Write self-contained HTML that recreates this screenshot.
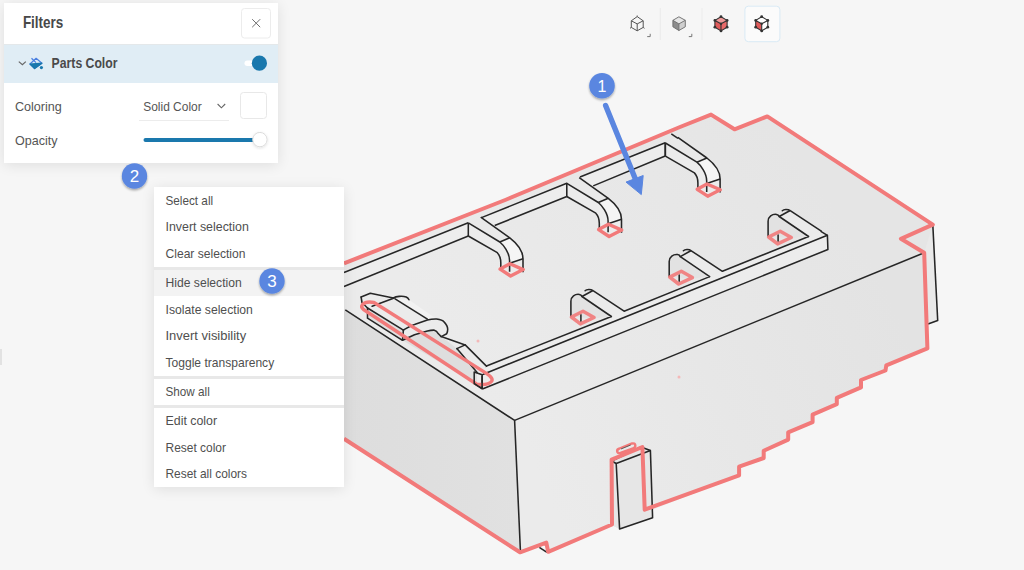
<!DOCTYPE html>
<html><head><meta charset="utf-8">
<style>
html,body{margin:0;padding:0;width:1024px;height:570px;overflow:hidden;background:#f6f6f6;}
svg{display:block;font-family:"Liberation Sans",sans-serif;}
</style></head>
<body>
<svg width="1024" height="570" viewBox="0 0 1024 570">
<defs>
  <filter id="soft" x="0" y="0" width="1024" height="570" filterUnits="userSpaceOnUse"><feGaussianBlur stdDeviation="0.35"/></filter>
  <filter id="sh2" x="-30%" y="-30%" width="160%" height="160%">
    <feGaussianBlur in="SourceAlpha" stdDeviation="7"/><feOffset dy="2"/>
    <feComponentTransfer><feFuncA type="linear" slope="0.10"/></feComponentTransfer>
    <feMerge><feMergeNode/><feMergeNode in="SourceGraphic"/></feMerge>
  </filter>
  <filter id="sh" x="-20%" y="-20%" width="140%" height="140%">
    <feDropShadow dx="0" dy="1" stdDeviation="1.5" flood-color="#000" flood-opacity="0.12"/>
  </filter>
  <filter id="bsh" x="-50%" y="-50%" width="200%" height="200%">
    <feDropShadow dx="0" dy="1.5" stdDeviation="1.2" flood-color="#000" flood-opacity="0.35"/>
  </filter>
</defs>
<rect x="0" y="0" width="1024" height="570" fill="#f6f6f6"/>
<rect x="0" y="349" width="2" height="16" fill="#e2e2e2"/>

<!-- MODEL -->
<g id="model" filter="url(#soft)">
  <defs>
    <linearGradient id="gLeft" x1="345" y1="0" x2="520" y2="0" gradientUnits="userSpaceOnUse">
      <stop offset="0" stop-color="#dddddd"/><stop offset="1" stop-color="#e1e1e1"/>
    </linearGradient>
    <linearGradient id="gRight" x1="540" y1="480" x2="900" y2="320" gradientUnits="userSpaceOnUse">
      <stop offset="0" stop-color="#ebebeb"/><stop offset="1" stop-color="#e3e3e3"/>
    </linearGradient>
    <linearGradient id="gTop" x1="480" y1="390" x2="800" y2="160" gradientUnits="userSpaceOnUse">
      <stop offset="0" stop-color="#ebebeb"/><stop offset="1" stop-color="#e5e5e5"/>
    </linearGradient>
    <g id="hb">
      <path d="M12.4,-5.6 L41.5,15 C48,20 54.7,28 54.7,36 V49.5 L43,55 L32.5,47.5 V40 C32.5,36 31,32 29,29.9 L0,13.2 V0 Z" fill="#ececec"/>
      <path d="M12.4,-5.6 L41.5,15 L31.5,19.2 L0,0 Z" fill="#e9e9e9"/>
      <path d="M41.5,15 C48,20 54.7,28 54.7,36 L41.3,40.5 C41.3,30 35,22 31.5,19.2 Z" fill="#f5f5f5"/>
      <g fill="none" stroke="#262626" stroke-width="1.55" stroke-linejoin="round">
        <path d="M0,0 V13.2"/>
        <path d="M0,0 L31.5,19.2 C35,22 41.3,30 41.3,38 V49"/>
        <path d="M0,13.2 L29,29.9 C31,32 32.5,36 32.5,40 V47.5"/>
        <path d="M31.5,19.2 L41.5,15"/>
        <path d="M12.4,-5.6 L41.5,15 C48,20 54.7,28 54.7,36 V49.5"/>
        <path d="M41.3,40.5 L54.7,36"/>
      </g>
      <path d="M31.8,46.3 L41.6,41 L54.9,46.8 L42.3,53.2 Z" fill="none" stroke="#f27a7a" stroke-width="3.4" stroke-linejoin="round"/>
    </g>
    <g id="hf">
      <path d="M-11.1,-1.5 V-16.5 C-11.1,-21 -7,-24 -2.7,-23.4 C-1.5,-23.2 -0.5,-22.5 0,-21.3 L10.5,-27.1 L42.1,-6.6 L29.4,-1.3 L11,0.8 Z" fill="#ebebeb"/>
      <path d="M-11.1,-1.5 V-16.5 C-11.1,-21 -7,-24 -2.7,-23.4 C-1.5,-23.2 -0.5,-22.5 0,-21.3 L29.4,-1.3 L11,0.8 Z" fill="#e2e2e2"/>
      <g fill="none" stroke="#262626" stroke-width="1.55" stroke-linejoin="round" stroke-linecap="round">
        <path d="M-11.1,-1.5 V-16.5 C-11.1,-21 -7,-24 -2.7,-23.4 C-1.5,-23.2 -0.5,-22.5 0,-21.3 L29.4,-1.3"/>
        <path d="M0,-21.3 L10.5,-27.1"/>
        <path d="M3.1,-27.1 C4.5,-28.5 8.5,-29 11,-27.1 L42.1,-6.6"/>
        <path d="M-1.1,-2.9 V3.4"/>
      </g>
      <path d="M-10.6,-0.8 L1,-6.6 L12.1,-0.3 L-1.6,6.1 Z" fill="none" stroke="#f27a7a" stroke-width="3.5" stroke-linejoin="round" stroke-opacity="0.9"/>
    </g>
  </defs>
  <!-- silhouette fill -->
  <path d="M344,263.3 L505.2,200 L680,127 L711,114.6 L734.5,129.3 L767.3,116.4 L932.8,224.6 L937.7,320.4 L928,324 L927.4,348.4 L886.3,365.3 L885.5,370.5 L861,380 L861,387.4 L836.8,397.9 L836.8,404.2 L812.6,414.7 L812.6,422.1 L788.2,432.3 L788.2,439.6 L763.7,450.7 L763.7,458 L739.1,466.7 L739.1,475.3 L652,510 L652.6,517.7 L619.6,529 L612,525 L548.2,551.8 L546.3,542.6 L520,552.3 L344,438.8 Z" fill="url(#gTop)"/>
  <path d="M345.3,309.9 L514.6,420.4 L520.4,551 L520,552.3 L344,438.8 L344,309 Z" fill="url(#gLeft)"/>
  <path d="M514.6,420.4 L924.2,252.8 L927.4,348.4 L886.3,365.3 L885.5,370.5 L861,380 L861,387.4 L836.8,397.9 L836.8,404.2 L812.6,414.7 L812.6,422.1 L788.2,432.3 L788.2,439.6 L763.7,450.7 L763.7,458 L739.1,466.7 L739.1,475.3 L645,511 L612,525 L548.2,551.8 L546.3,542.6 L520.4,551 Z" fill="url(#gRight)"/>
  <path d="M924.2,252.8 L932.8,224.6 L937.7,320.4 L928,324 Z" fill="#e9e9e9"/>
  <!-- back wall faces -->
  <path d="M344,272.5 L468.3,222.8 L468.3,236 L344,286.5 Z" fill="#ededed"/>
  <path d="M481.5,217.6 L566.8,183.3 L566.8,196.5 L494.7,225.5 Z" fill="#ededed"/>
  <path d="M580,177 L665.2,142.8 L665.2,156 L593.2,185.9 Z" fill="#ededed"/>
  <!-- front rail -->
  <path d="M474.2,372.1 L477.7,369.5 L820,230.8 L827.4,235.3 L827.9,249.5 L483,388.8 L474.2,383.5 Z" fill="#ececec"/>
  <g fill="none" stroke="#262626" stroke-width="1.55" stroke-linejoin="round">
    <!-- box edges -->
    <path d="M345.3,309.9 L514.6,420.4 L520.4,550.6"/>
    <path d="M514.6,420.4 L924.2,252.8"/>
    <path d="M932.8,224.6 L937.7,320.4 L928,324"/>
    <path d="M539.3,547.3 L547,552.3"/>
    <!-- back wall -->
    <path d="M344,272.5 L468.3,222.8"/>
    <path d="M344,286.5 L468.3,236"/>
    <path d="M481.5,217.6 L566.8,183.3 V196.5 L494.7,225.5"/>
    <path d="M580,177 L665.2,142.8 V156 L593.2,185.9"/>
    <!-- front rail -->
    <path d="M477.7,369.5 L611.4,316.5"/>
    <path d="M624.1,311.2 L709.7,276.6"/>
    <path d="M722.4,271.3 L808.6,236.5"/>
    <path d="M820,230.8 L827.4,235.3"/>
    <path d="M474.2,372.1 L482.1,374.7 L827.4,235.3 L827.9,249.5 L483,388.8 L474.2,383.5 Z"/>
    <path d="M482.1,374.7 V388.8"/>
    <path d="M477.7,369.5 L474.2,372.1"/>
  </g>
  <use href="#hb" x="468.3" y="222.8"/>
  <use href="#hb" x="566.8" y="183.3"/>
  <use href="#hb" x="665.4" y="143"/>
  <path d="M671.3,133.8 L678,138.4" fill="none" stroke="#262626" stroke-width="1.55"/>
  <use href="#hf" x="582" y="317.8"/>
  <use href="#hf" x="680.3" y="277.9"/>
  <use href="#hf" x="779.2" y="237.8"/>
  <!-- latch -->
  <g>
    <path d="M361.1,297 L370.3,293.3 L393.3,297.9 C396,296.5 402,295.5 406.2,297 L409,299.7 L427.4,319.1 L436.6,319.1 C441,319.5 445,322 447.7,329.2 L465.2,344.9 L486.4,366.1 L477.1,384.5 L402.5,340.3 L367.5,318.2 L367.5,308 L361.1,302.5 Z" fill="#ebebeb"/>
    <path d="M367.5,308 L403.4,330.1 L402.5,340.3 L367.5,318.2 Z" fill="#e0e0e0"/>
    <path d="M402.5,340.3 L414.5,334.8 L427.4,331.1 L433.8,330.1 L441.2,336.6 L456.9,348.6 L477.1,372.5 L477.1,384.5 Z" fill="#dedede"/>
    <path d="M395.1,298.8 L409,299.7 L436.6,319.1 L427.4,320 Z" fill="#f2f2f2"/>
    <g fill="none" stroke="#262626" stroke-width="1.55" stroke-linejoin="round" stroke-linecap="round">
      <path d="M361.1,297 L370.3,293.3 L393.3,297.9 C396,296.5 402,295.5 406.2,297 C407.5,297.6 408.5,298.6 409,299.7"/>
      <path d="M361.1,297 L362,302.5 L367.5,308 L403.4,330.1"/>
      <path d="M367.5,308 V318.2 L402.5,340.3 L403.4,330.1"/>
      <path d="M372.1,306.2 L394.2,297.9"/>
      <path d="M395.1,298.8 L427.4,319.1"/>
      <path d="M403.4,330.1 C407,328 410,326 414.5,324.6 L427.4,320 C431,319.2 434,319 436.6,319.1 C440,319.5 443,320.5 444,321.9 C446,324 447.7,326.5 447.7,329.2 C447.7,331 447.3,332.5 446.7,333.8 L441.2,336.6"/>
      <path d="M402.5,340.3 L414.5,334.8 L427.4,331.1 C429.5,330.5 431.5,330.1 433.8,330.1 C435.5,330.5 437.5,332 438.4,333.8 L441.2,336.6 L465.2,344.9 L486.4,366.1"/>
      <path d="M456.9,348.6 L465.2,344.9"/>
      <path d="M456.9,348.6 L477.1,372.5"/>
    </g>
    <path d="M374,302.5 L486.4,373.4 Q494,378.5 491.5,381.5 Q489,384.5 482,384.5 L477.1,384.5 L363.5,309.5 Q360.5,307 362.5,304.5 Q366,301 374,302.5 Z" fill="none" stroke="#f27a7a" stroke-width="3.4" stroke-linejoin="round"/>
  </g>
  <g fill="none" stroke="#262626" stroke-width="1.55" stroke-linejoin="round">
    <path d="M474.2,372.1 L482.1,374.7 V388.8 L474.2,383.5 Z"/>
  </g>
  <!-- tab -->
  <path d="M611.6,461 L641,447 L650.4,450.5 L652.6,517.7 L619.6,529 L612.8,525.7 Z" fill="#e6e6e6"/>
  <g fill="none" stroke="#262626" stroke-width="1.55" stroke-linejoin="round">
    <path d="M616.2,463.5 L650.4,450.5 L652.6,517.7 L619.6,529 Z"/>
    <path d="M611.6,461 L641,447 L650.4,450.5"/>
    <path d="M611.6,461 L616.2,463.5"/>
  </g>
  <!-- red outline -->
  <path d="M344,263.3 L505.2,200 L680,127 L711,114.6 L734.5,129.3 L767.3,116.4 L932.8,224.6 L900.9,238.8 L924.2,252.8 L927.4,348.4 L886.3,365.3 L885.5,370.5 L861,380 L861,387.4 L836.8,397.9 L836.8,404.2 L812.6,414.7 L812.6,422.1 L788.2,432.3 L788.2,439.6 L763.7,450.7 L763.7,458 L739.1,466.7 L739.1,475.3 L644.7,509.7 L642.4,447 L611.6,459.6 L612,524.5 L548.2,551.8 L546.3,542.6 L520,552.3 L344,438.8" fill="none" stroke="#f27a7a" stroke-width="4" stroke-linejoin="round"/>
  <path d="M619.5,448.5 L632,443.5 C636,442.5 636.5,447 633,448.5 L620.5,453 C616.5,454 616,449.5 619.5,448.5 Z" fill="none" stroke="#f27a7a" stroke-width="2.4"/>
  <path d="M621,449 L630.7,445" stroke="#555" stroke-width="0.9"/>
  <circle cx="478" cy="341" r="1.5" fill="#f4b8b8"/>
  <circle cx="679" cy="377" r="1.5" fill="#f4b8b8"/>
  <!-- arrow -->
  <path d="M605.6,105.5 L637,183" stroke="#5a86e0" stroke-width="5.4" stroke-linecap="round"/>
  <path d="M641.3,194.6 L626,182.1 L643.2,175.5 Z" fill="#5a86e0" stroke="#5a86e0" stroke-width="1" stroke-linejoin="round"/>
</g>

<!-- TOOLBAR -->
<g id="toolbar">
  <line x1="660.3" y1="8" x2="660.3" y2="40" stroke="#ececec" stroke-width="1"/>
  <line x1="702" y1="8" x2="702" y2="40" stroke="#ececec" stroke-width="1"/>
  <rect x="744.9" y="6.2" width="35" height="35.5" rx="3.5" fill="#fbfbfb" stroke="#d9eaf5" stroke-width="1"/>
  <!-- cube 1 wireframe -->
  <g fill="none" stroke="#555" stroke-width="1" stroke-linejoin="round">
    <path d="M637.2,16.6 L643.2,20.8 L643.2,27.4 L637.2,30.8 L631.3,27.4 L631.3,20.8 Z"/>
    <path d="M631.3,20.8 L637.2,23.9 L643.2,20.8 M637.2,23.9 V30.8"/>
    <path d="M637.2,16.6 V15.5 M631.3,27.4 L630,28.3 M643.2,27.4 L644.5,28.3"/>
  </g>
  <path d="M647.2,36.6 H650.2 V33.8" fill="none" stroke="#777" stroke-width="1"/>
  <!-- cube 2 shaded -->
  <path d="M678.9,16.8 L685.3,20.3 L678.9,23.9 L672.9,20.3 Z" fill="#e6e6e6"/>
  <path d="M672.9,20.3 L678.9,23.9 L678.9,30.5 L672.9,26.8 Z" fill="#8c8c8c"/>
  <path d="M685.3,20.3 L678.9,23.9 L678.9,30.5 L685.3,26.8 Z" fill="#cfcfcf"/>
  <g fill="none" stroke="#6a6a6a" stroke-width="0.9" stroke-linejoin="round">
    <path d="M678.9,16.8 L685.3,20.3 L685.3,26.8 L678.9,30.5 L672.9,26.8 L672.9,20.3 Z"/>
    <path d="M672.9,20.3 L678.9,23.9 L685.3,20.3 M678.9,23.9 V30.5"/>
  </g>
  <path d="M688.8,36.6 H691.8 V33.8" fill="none" stroke="#777" stroke-width="1"/>
  <!-- cube 3 red -->
  <path d="M721,16.7 L727.1,20.4 L721,23.8 L714.9,20.4 Z" fill="#f09a9a"/>
  <path d="M714.9,20.4 L721,23.8 L721,30.9 L714.9,27.2 Z" fill="#e05a5a"/>
  <path d="M727.1,20.4 L721,23.8 L721,30.9 L727.1,27.2 Z" fill="#ea6a6a"/>
  <g fill="none" stroke="#333" stroke-width="1.1" stroke-linejoin="round">
    <path d="M721,16.7 L727.1,20.4 L727.1,27.2 L721,30.9 L714.9,27.2 L714.9,20.4 Z"/>
    <path d="M714.9,20.4 L721,23.8 L727.1,20.4 M721,23.8 V30.9"/>
  </g>
  <g fill="#333">
    <circle cx="721" cy="16.7" r="1.4"/><circle cx="727.1" cy="20.4" r="1.4"/><circle cx="727.1" cy="27.2" r="1.4"/>
    <circle cx="721" cy="30.9" r="1.4"/><circle cx="714.9" cy="27.2" r="1.4"/><circle cx="714.9" cy="20.4" r="1.4"/><circle cx="721" cy="23.8" r="1.2"/>
  </g>
  <!-- cube 4 -->
  <path d="M761.7,16.7 L767.8,20.4 L761.7,23.8 L755.7,20.4 Z" fill="#fff"/>
  <path d="M755.7,20.4 L761.7,23.8 L761.7,30.9 L755.7,27.2 Z" fill="#e05a5a"/>
  <path d="M767.8,20.4 L761.7,23.8 L761.7,30.9 L767.8,27.2 Z" fill="#fff"/>
  <g fill="none" stroke="#333" stroke-width="1.1" stroke-linejoin="round">
    <path d="M761.7,16.7 L767.8,20.4 L767.8,27.2 L761.7,30.9 L755.7,27.2 L755.7,20.4 Z"/>
    <path d="M755.7,20.4 L761.7,23.8 L767.8,20.4 M761.7,23.8 V30.9"/>
  </g>
  <g fill="#333">
    <circle cx="761.7" cy="16.7" r="1.4"/><circle cx="767.8" cy="20.4" r="1.4"/><circle cx="767.8" cy="27.2" r="1.4"/>
    <circle cx="761.7" cy="30.9" r="1.4"/><circle cx="755.7" cy="27.2" r="1.4"/><circle cx="755.7" cy="20.4" r="1.4"/><circle cx="761.7" cy="23.8" r="1.2"/>
  </g>
</g>

<!-- FILTER PANEL -->
<g id="panel">
  <rect x="4" y="3" width="274" height="160" fill="#fff" filter="url(#sh2)"/>
  <rect x="4" y="44" width="274" height="39" fill="#e0edf5"/>
  <line x1="4" y1="44.5" x2="278" y2="44.5" stroke="#e4e8ea" stroke-width="1"/>
  <text x="22.9" y="28.4" font-size="15.9" font-weight="bold" fill="#484848" textLength="40.4" lengthAdjust="spacingAndGlyphs">Filters</text>
  <rect x="241.5" y="8.5" width="29" height="29.5" rx="3" fill="#fff" stroke="#ececec"/>
  <path d="M252.2 19.2 L260.2 27.2 M260.2 19.2 L252.2 27.2" stroke="#6e6e6e" stroke-width="1"/>
  <path d="M18.8 61.6 L22.4 64.8 L25.8 61.6" fill="none" stroke="#666" stroke-width="1.2"/>
  <path d="M36.1,58.3 L41.9,63.2 L34.6,68.6 L30,64 Z" fill="none" stroke="#4a7fe0" stroke-width="1.2" stroke-linejoin="round"/>
  <path d="M30,64 L41.9,63.2 L34.6,68.6 Z" fill="#1a78ad" stroke="#1a78ad" stroke-width="1.2" stroke-linejoin="round"/>
  <path d="M31.5,58.2 L36,62.6" stroke="#4a7fe0" stroke-width="1.2"/>
  <circle cx="41.4" cy="67.6" r="1.6" fill="#1a78ad"/>
  <text x="51.6" y="68.3" font-size="14" font-weight="bold" fill="#4a4a4a" textLength="65.9" lengthAdjust="spacingAndGlyphs">Parts Color</text>
  <rect x="244.5" y="60.5" width="14" height="5.5" rx="2.75" fill="#fff"/>
  <circle cx="259.4" cy="63.2" r="7.6" fill="#1a78ad"/>
  <text x="14.9" y="110.7" font-size="12.8" fill="#555" textLength="46.9" lengthAdjust="spacingAndGlyphs">Coloring</text>
  <text x="15" y="144.6" font-size="12.8" fill="#555" textLength="42.5" lengthAdjust="spacingAndGlyphs">Opacity</text>
  <text x="143.2" y="110.6" font-size="12.6" fill="#555" textLength="58.5" lengthAdjust="spacingAndGlyphs">Solid Color</text>
  <path d="M217.6 104 L221.4 107.8 L225.2 104" fill="none" stroke="#666" stroke-width="1.1"/>
  <line x1="139" y1="120.5" x2="229" y2="120.5" stroke="#ececec" stroke-width="1"/>
  <rect x="240.5" y="92.5" width="26" height="26" rx="3" fill="#fff" stroke="#e8e8e8"/>
  <line x1="145.5" y1="140" x2="258" y2="140" stroke="#1a78ad" stroke-width="4" stroke-linecap="round"/>
  <circle cx="259.9" cy="139.6" r="7.2" fill="#fff" stroke="#dcdcdc" stroke-width="1" filter="url(#sh)"/>
</g>

<!-- CONTEXT MENU -->
<g id="menu">
  <rect x="154" y="187" width="190" height="300" fill="#fff" filter="url(#sh2)"/>
  <rect x="154" y="270" width="190" height="26" fill="#f3f3f3"/>
  <rect x="154" y="267" width="190" height="3" fill="#e8e8e8"/>
  <rect x="154" y="376" width="190" height="3" fill="#e8e8e8"/>
  <rect x="154" y="405" width="190" height="3" fill="#e8e8e8"/>
  <text x="165.5" y="204.6" font-size="12.2" fill="#4f4f4f" textLength="47.6" lengthAdjust="spacingAndGlyphs">Select all</text>
  <text x="165.5" y="231.3" font-size="12.2" fill="#4f4f4f" textLength="83.3" lengthAdjust="spacingAndGlyphs">Invert selection</text>
  <text x="165.5" y="258.2" font-size="12.2" fill="#4f4f4f" textLength="80" lengthAdjust="spacingAndGlyphs">Clear selection</text>
  <text x="165.5" y="286.9" font-size="12.2" fill="#4f4f4f" textLength="76.2" lengthAdjust="spacingAndGlyphs">Hide selection</text>
  <text x="165.5" y="313.6" font-size="12.2" fill="#4f4f4f" textLength="87.4" lengthAdjust="spacingAndGlyphs">Isolate selection</text>
  <text x="165.5" y="340.3" font-size="12.2" fill="#4f4f4f" textLength="80.7" lengthAdjust="spacingAndGlyphs">Invert visibility</text>
  <text x="165.5" y="366.9" font-size="12.2" fill="#4f4f4f" textLength="108.7" lengthAdjust="spacingAndGlyphs">Toggle transparency</text>
  <text x="165.5" y="396" font-size="12.2" fill="#4f4f4f" textLength="44.3" lengthAdjust="spacingAndGlyphs">Show all</text>
  <text x="165.5" y="424.9" font-size="12.2" fill="#4f4f4f" textLength="51.6" lengthAdjust="spacingAndGlyphs">Edit color</text>
  <text x="165.5" y="451.6" font-size="12.2" fill="#4f4f4f" textLength="60.5" lengthAdjust="spacingAndGlyphs">Reset color</text>
  <text x="165.5" y="478.4" font-size="12.2" fill="#4f4f4f" textLength="81.5" lengthAdjust="spacingAndGlyphs">Reset all colors</text>
</g>

<!-- BADGES -->
<g id="badges">
  <g filter="url(#bsh)">
    <circle cx="602" cy="85.7" r="12.8" fill="#5a86e0"/>
    <circle cx="134.5" cy="176" r="12.7" fill="#5a86e0"/>
    <circle cx="272" cy="281" r="12.7" fill="#5a86e0"/>
  </g>
  <text x="602" y="91.5" font-size="16" fill="#fff" text-anchor="middle">1</text>
  <text x="134.5" y="182" font-size="17" fill="#fff" text-anchor="middle">2</text>
  <text x="272" y="287" font-size="17" fill="#fff" text-anchor="middle">3</text>
</g>
</svg>
</body></html>
